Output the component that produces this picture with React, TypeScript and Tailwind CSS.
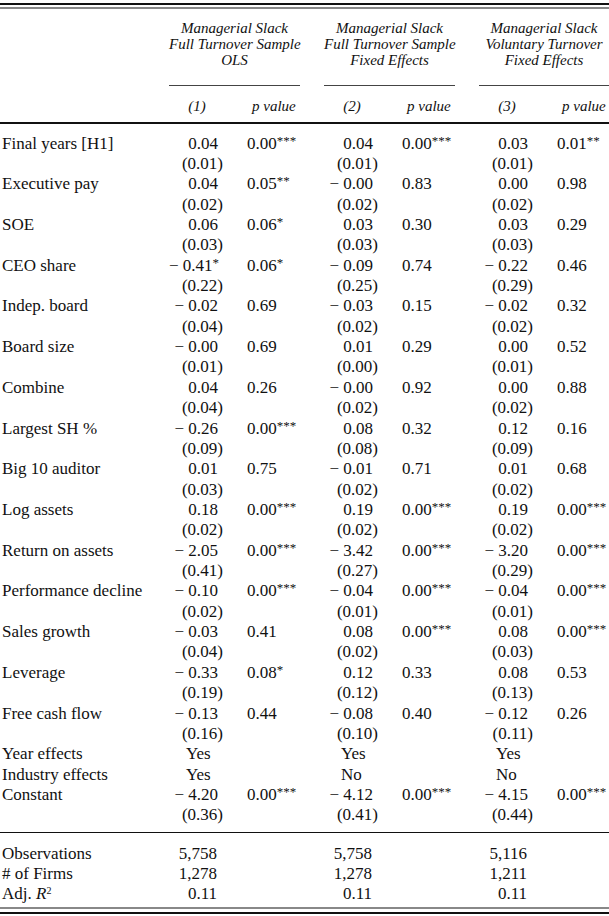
import React from "react";

type Cell = { c: string; p?: string; se?: string };
type Row = { label: string; cells: Cell[] };

const rows: Row[] = [
  { label: "Final years [H1]", cells: [{ c: "0.04", p: "0.00***", se: "(0.01)" }, { c: "0.04", p: "0.00***", se: "(0.01)" }, { c: "0.03", p: "0.01**", se: "(0.01)" }] },
  { label: "Executive pay", cells: [{ c: "0.04", p: "0.05**", se: "(0.02)" }, { c: "− 0.00", p: "0.83", se: "(0.02)" }, { c: "0.00", p: "0.98", se: "(0.02)" }] },
  { label: "SOE", cells: [{ c: "0.06", p: "0.06*", se: "(0.03)" }, { c: "0.03", p: "0.30", se: "(0.03)" }, { c: "0.03", p: "0.29", se: "(0.03)" }] },
  { label: "CEO share", cells: [{ c: "− 0.41*", p: "0.06*", se: "(0.22)" }, { c: "− 0.09", p: "0.74", se: "(0.25)" }, { c: "− 0.22", p: "0.46", se: "(0.29)" }] },
  { label: "Indep. board", cells: [{ c: "− 0.02", p: "0.69", se: "(0.04)" }, { c: "− 0.03", p: "0.15", se: "(0.02)" }, { c: "− 0.02", p: "0.32", se: "(0.02)" }] },
  { label: "Board size", cells: [{ c: "− 0.00", p: "0.69", se: "(0.01)" }, { c: "0.01", p: "0.29", se: "(0.00)" }, { c: "0.00", p: "0.52", se: "(0.01)" }] },
  { label: "Combine", cells: [{ c: "0.04", p: "0.26", se: "(0.04)" }, { c: "− 0.00", p: "0.92", se: "(0.02)" }, { c: "0.00", p: "0.88", se: "(0.02)" }] },
  { label: "Largest SH %", cells: [{ c: "− 0.26", p: "0.00***", se: "(0.09)" }, { c: "0.08", p: "0.32", se: "(0.08)" }, { c: "0.12", p: "0.16", se: "(0.09)" }] },
  { label: "Big 10 auditor", cells: [{ c: "0.01", p: "0.75", se: "(0.03)" }, { c: "− 0.01", p: "0.71", se: "(0.02)" }, { c: "0.01", p: "0.68", se: "(0.02)" }] },
  { label: "Log assets", cells: [{ c: "0.18", p: "0.00***", se: "(0.02)" }, { c: "0.19", p: "0.00***", se: "(0.02)" }, { c: "0.19", p: "0.00***", se: "(0.02)" }] },
  { label: "Return on assets", cells: [{ c: "− 2.05", p: "0.00***", se: "(0.41)" }, { c: "− 3.42", p: "0.00***", se: "(0.27)" }, { c: "− 3.20", p: "0.00***", se: "(0.29)" }] },
  { label: "Performance decline", cells: [{ c: "− 0.10", p: "0.00***", se: "(0.02)" }, { c: "− 0.04", p: "0.00***", se: "(0.01)" }, { c: "− 0.04", p: "0.00***", se: "(0.01)" }] },
  { label: "Sales growth", cells: [{ c: "− 0.03", p: "0.41", se: "(0.04)" }, { c: "0.08", p: "0.00***", se: "(0.02)" }, { c: "0.08", p: "0.00***", se: "(0.03)" }] },
  { label: "Leverage", cells: [{ c: "− 0.33", p: "0.08*", se: "(0.19)" }, { c: "0.12", p: "0.33", se: "(0.12)" }, { c: "0.08", p: "0.53", se: "(0.13)" }] },
  { label: "Free cash flow", cells: [{ c: "− 0.13", p: "0.44", se: "(0.16)" }, { c: "− 0.08", p: "0.40", se: "(0.10)" }, { c: "− 0.12", p: "0.26", se: "(0.11)" }] },
];

const groups = [
  ["Managerial Slack", "Full Turnover Sample", "OLS"],
  ["Managerial Slack", "Full Turnover Sample", "Fixed Effects"],
  ["Managerial Slack", "Voluntary Turnover", "Fixed Effects"],
];

// splits trailing stars off so they can be raised like LaTeX superscripts
function Num({ v }: { v?: string }) {
  if (!v) return null;
  const m = v.match(/^(.*?)(\*+)$/);
  if (!m) return <>{v}</>;
  return (
    <>
      {m[1]}
      <span className="relative -top-[4px] text-[13px] leading-none">{m[2]}</span>
    </>
  );
}

const grid = "grid grid-cols-[145px_131px_131px_130px] gap-x-6";

function Line({ label, children }: { label?: React.ReactNode; children: React.ReactNode }) {
  return (
    <div className={`${grid} h-[20.37px] items-center`}>
      <div className="pl-[2px] whitespace-nowrap">{label}</div>
      {children}
    </div>
  );
}

function CoefCell({ c, p }: { c?: string; p?: string }) {
  return (
    <div className="grid grid-cols-[49px_1fr] whitespace-nowrap">
      <div className="text-right"><Num v={c} /></div>
      <div className="pl-[29px]"><Num v={p} /></div>
    </div>
  );
}

function SeCell({ se }: { se?: string }) {
  return (
    <div className="whitespace-nowrap">
      <div className="w-[54px] text-right">{se}</div>
    </div>
  );
}

function PlainCell({ v }: { v: string }) {
  return <div className="pl-[17px] whitespace-nowrap">{v}</div>;
}

function RightCell({ v }: { v: string }) {
  return (
    <div className="whitespace-nowrap">
      <div className="w-[48px] text-right">{v}</div>
    </div>
  );
}

export default function App() {
  return (
    <div className="w-[609px] h-[916px] overflow-hidden bg-white text-[#111] font-['Liberation_Serif',serif] text-[17px]">
      <div className="pt-[3px]">
        <div className="h-[2px] bg-[#111]" />
        <div className="mt-[2px] h-[2px] bg-[#888]" />
      </div>

      {/* column heads */}
      <div className={`${grid} pt-[11px] italic text-[15px]`}>
        <div />
        {groups.map((g, i) => (
          <div key={i} className="flex flex-col">
            <div className="text-center leading-[16px] whitespace-nowrap">
              {g.map((t) => (
                <div key={t}>{t}</div>
              ))}
            </div>
            <div className="mt-[17px] h-px bg-[#444]" />
          </div>
        ))}
      </div>
      <div className={`${grid} mt-[9px] h-[20px] items-center italic text-[15px]`}>
        <div />
        {["(1)", "(2)", "(3)"].map((n) => (
          <div key={n} className="grid grid-cols-[56px_1fr] whitespace-nowrap">
            <div className="text-center">{n}</div>
            <div className="pl-[27px]">p value</div>
          </div>
        ))}
      </div>
      <div className="mt-[7px] h-[1.5px] bg-[#111]" />

      <div className="pt-[7px]">
        {rows.map((r) => (
          <React.Fragment key={r.label}>
            <Line label={r.label}>
              {r.cells.map((c, i) => (
                <CoefCell key={i} c={c.c} p={c.p} />
              ))}
            </Line>
            <Line>
              {r.cells.map((c, i) => (
                <SeCell key={i} se={c.se} />
              ))}
            </Line>
          </React.Fragment>
        ))}
        <Line label="Year effects">
          <PlainCell v="Yes" />
          <PlainCell v="Yes" />
          <PlainCell v="Yes" />
        </Line>
        <Line label="Industry effects">
          <PlainCell v="Yes" />
          <PlainCell v="No" />
          <PlainCell v="No" />
        </Line>
        <Line label="Constant">
          <CoefCell c="− 4.20" p="0.00***" />
          <CoefCell c="− 4.12" p="0.00***" />
          <CoefCell c="− 4.15" p="0.00***" />
        </Line>
        <Line>
          <SeCell se="(0.36)" />
          <SeCell se="(0.41)" />
          <SeCell se="(0.44)" />
        </Line>
      </div>

      <div className="mt-[9px] h-[1.5px] bg-[#111]" />

      <div className="pt-[7.5px]">
        <Line label="Observations">
          <RightCell v="5,758" />
          <RightCell v="5,758" />
          <RightCell v="5,116" />
        </Line>
        <Line label="# of Firms">
          <RightCell v="1,278" />
          <RightCell v="1,278" />
          <RightCell v="1,211" />
        </Line>
        <Line
          label={
            <>
              Adj. <i>R</i>
              <span className="relative -top-[5px] text-[10px] leading-none">2</span>
            </>
          }
        >
          <RightCell v="0.11" />
          <RightCell v="0.11" />
          <RightCell v="0.11" />
        </Line>
      </div>

      <div className="mt-[5px] h-[2.5px] bg-[#888]" />
      <div className="mt-[3px] h-[1.5px] bg-[#111]" />
    </div>
  );
}
